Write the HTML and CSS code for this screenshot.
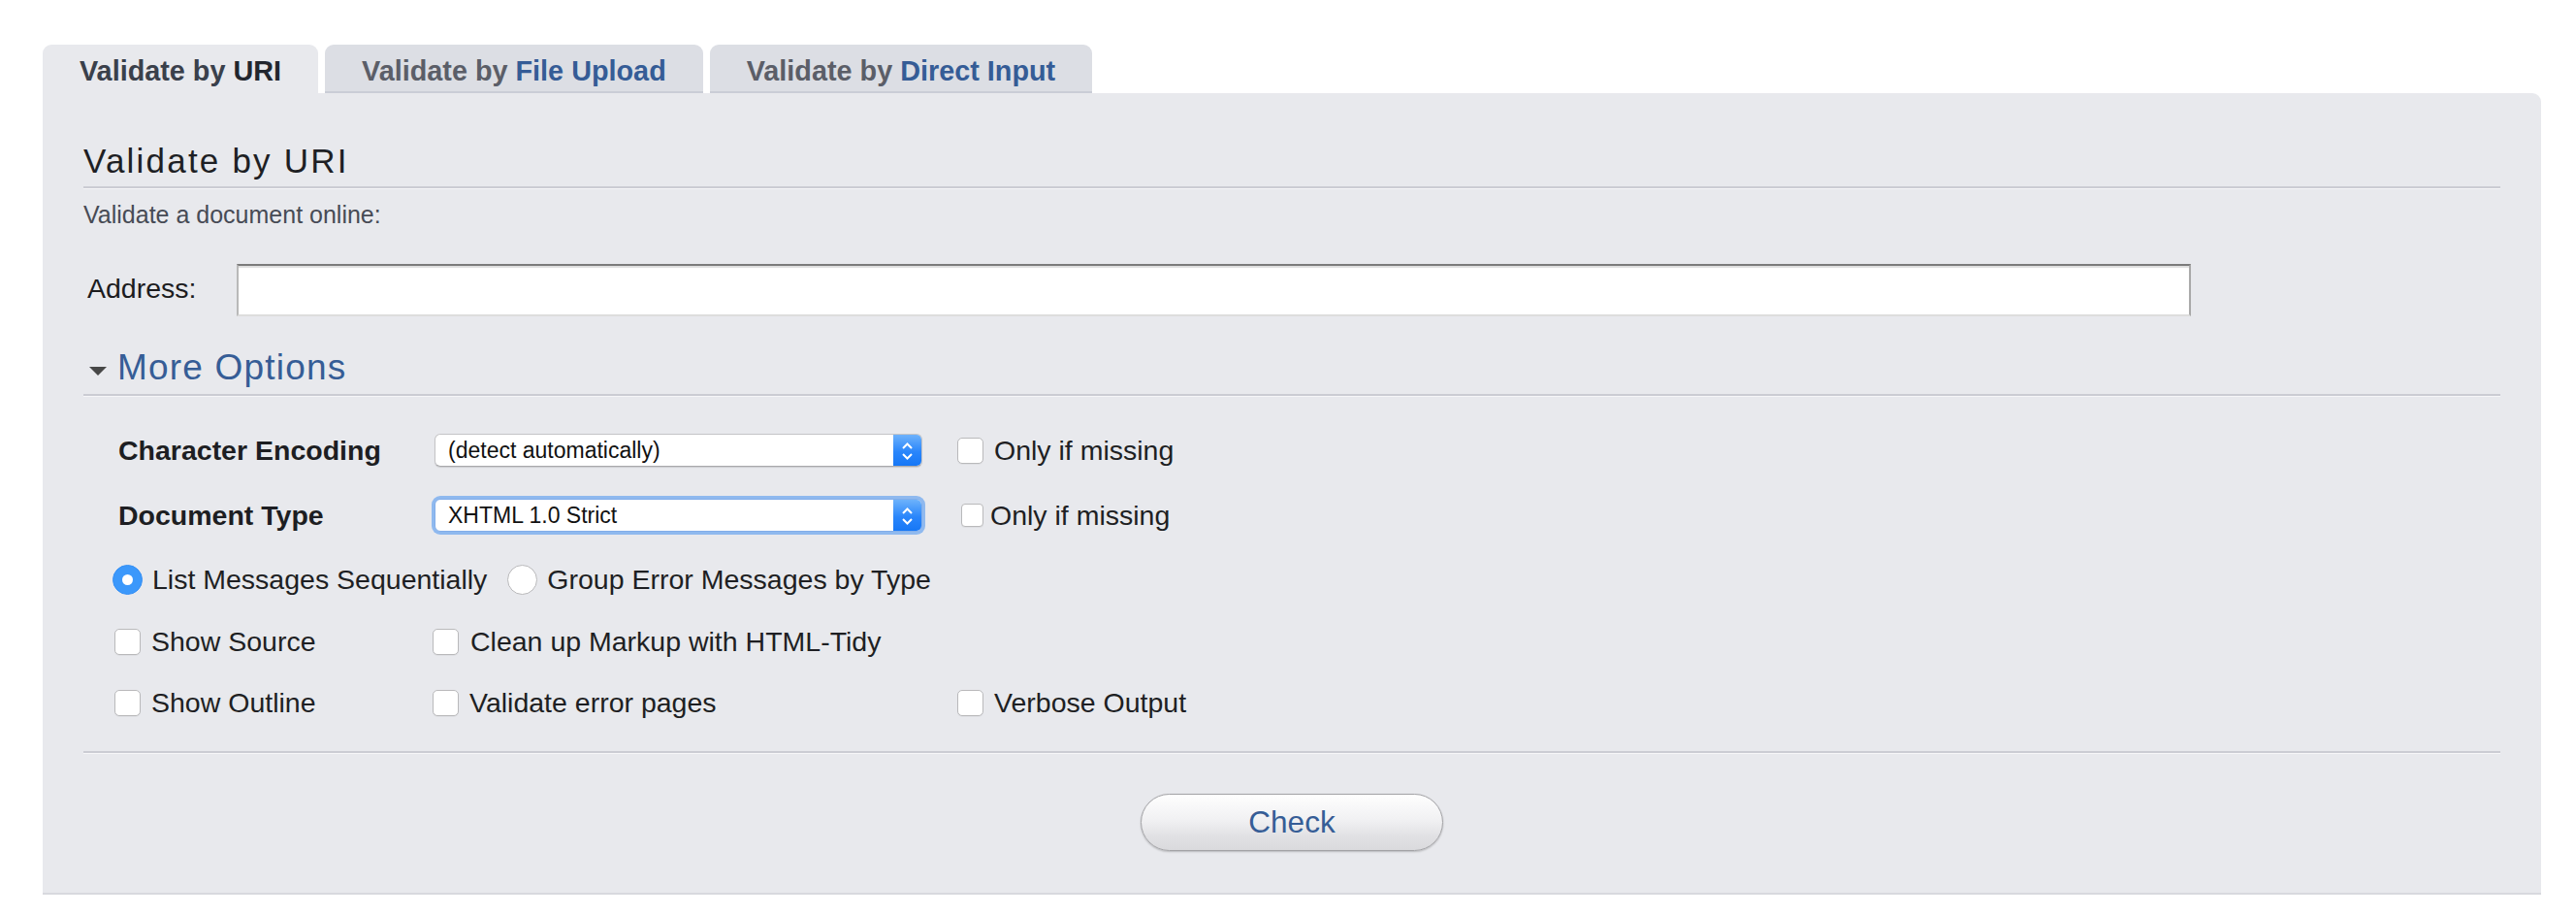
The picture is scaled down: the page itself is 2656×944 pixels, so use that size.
FILE: index.html
```html
<!DOCTYPE html>
<html lang="en">
<head>
<meta charset="utf-8">
<title>Validate by URI</title>
<link rel="stylesheet" href="styles.css">
</head>
<body>
<div class="page">
  <ul class="tabs">
    <li class="tab tab-active"><span class="tab-pre">Validate by</span> <span class="tab-key">URI</span></li>
    <li class="tab"><span class="tab-pre">Validate by</span> <span class="tab-key">File Upload</span></li>
    <li class="tab"><span class="tab-pre">Validate by</span> <span class="tab-key">Direct Input</span></li>
  </ul>
  <div class="panel">
    <h2 class="panel-title">Validate by URI</h2>
    <p class="intro">Validate a document online:</p>
    <div class="address-row">
      <label class="address-label" for="uri">Address:</label>
      <input class="address-input" id="uri" type="text">
    </div>
    <h3 class="more"><span class="tri"></span>More Options</h3>
    <div class="options">
      <div class="opt-label">Character Encoding</div>
      <div class="select">
        <span class="select-text">(detect automatically)</span>
        <span class="select-arrow"><svg width="29" height="34" viewBox="0 0 29 34"><polyline points="10,14 14.5,9.5 19,14" fill="none" stroke="#fff" stroke-width="2"/><polyline points="10,20 14.5,24.5 19,20" fill="none" stroke="#fff" stroke-width="2"/></svg></span>
      </div>
      <label class="check"><input type="checkbox" class="box">Only if missing</label>

      <div class="opt-label">Document Type</div>
      <div class="select select-focus">
        <span class="select-text">XHTML 1.0 Strict</span>
        <span class="select-arrow"><svg width="29" height="34" viewBox="0 0 29 34"><polyline points="10,14 14.5,9.5 19,14" fill="none" stroke="#fff" stroke-width="2"/><polyline points="10,20 14.5,24.5 19,20" fill="none" stroke="#fff" stroke-width="2"/></svg></span>
      </div>
      <label class="check check-tight"><input type="checkbox" class="box box-small">Only if missing</label>

      <div class="radios">
        <label class="radio"><input type="radio" name="group" class="dot" checked>List Messages Sequentially</label>
        <label class="radio"><input type="radio" name="group" class="dot">Group Error Messages by Type</label>
      </div>

      <label class="check check-first"><input type="checkbox" class="box">Show Source</label>
      <label class="check check-wide"><input type="checkbox" class="box">Clean up Markup with HTML-Tidy</label>

      <label class="check check-first"><input type="checkbox" class="box">Show Outline</label>
      <label class="check"><input type="checkbox" class="box">Validate error pages</label>
      <label class="check"><input type="checkbox" class="box">Verbose Output</label>
    </div>
    <div class="actions">
      <button class="check-btn" type="button">Check</button>
    </div>
  </div>
</div>
</body>
</html>
```

FILE: styles.css
```css
* { box-sizing: border-box; }

html, body {
  margin: 0;
  padding: 0;
  background: #ffffff;
}

body {
  font-family: "Liberation Sans", Arial, Helvetica, sans-serif;
  font-size: 28.5px;
  color: #1f2024;
}

.page {
  padding: 46px 36px 0 44px;
}

/* Tabs */
.tabs {
  list-style: none;
  margin: 0;
  padding: 0;
  display: flex;
  gap: 7px;
}

.tab {
  height: 50px;
  padding: 4px 38px 0;
  line-height: 46px;
  font-weight: bold;
  font-size: 28.8px;
  white-space: nowrap;
  background: #dcdee4;
  border-bottom: 2px solid #cacdd6;
  border-radius: 9px 9px 0 0;
}

.tab .tab-pre { color: #5b5e68; }
.tab .tab-key { color: #355c96; }

.tab-active {
  background: #e8e9ed;
  border-bottom: none;
}
.tab-active .tab-pre { color: #3a404b; }
.tab-active .tab-key { color: #22262e; }

/* Panel */
.panel {
  width: 2576px;
  background: #e8e9ed;
  border-radius: 0 9px 0 0;
  border-bottom: 2px solid #d8d9de;
  padding: 49px 42px 43px;
}

.panel-title {
  margin: 0;
  font-size: 35px;
  font-weight: normal;
  line-height: 42px;
  letter-spacing: 2.2px;
  color: #1e1f24;
  padding-bottom: 5px;
  border-bottom: 2px solid #cbccd3;
  box-shadow: 0 1px 0 #f6f6f8;
}

.intro {
  margin: 12px 0 0;
  font-size: 25px;
  line-height: 30px;
  color: #474b55;
}

.address-row {
  margin-top: 36px;
  display: flex;
  align-items: center;
  height: 54px;
}

.address-label {
  width: 158px;
  padding-left: 4px;
  padding-bottom: 3px;
  color: #1c1c1e;
}

.address-input {
  width: 2015px;
  height: 54px;
  margin: 0;
  background: #ffffff;
  border-style: solid;
  border-width: 2px;
  border-color: #7b7b7b #a9a9a9 #dddddd #b9b9b9;
  box-shadow: inset 0 2px 1px #dedede;
  font-family: inherit;
  font-size: 26px;
  padding: 0 8px;
  outline: none;
}

.more {
  margin: 31px 0 0;
  font-size: 37px;
  font-weight: normal;
  line-height: 44px;
  letter-spacing: 1.2px;
  color: #365d96;
  display: flex;
  align-items: center;
  padding-bottom: 5px;
  border-bottom: 2px solid #cbccd3;
  box-shadow: 0 1px 0 #f6f6f8;
}

.tri {
  width: 0;
  height: 0;
  margin: 7px 11px 0 6px;
  border-left: 9px solid transparent;
  border-right: 9px solid transparent;
  border-top: 9px solid #474747;
}

/* Options grid */
.options {
  margin-top: 22.5px;
  padding: 0 0 18.5px 30px;
  display: grid;
  grid-template-columns: 330px 541px auto;
  grid-template-rows: 67px 67px 65px 63px 63px;
  align-items: center;
  border-bottom: 2px solid #cbccd3;
  box-shadow: 0 1px 0 #f6f6f8;
}

.opt-label {
  font-weight: bold;
  color: #1d1e22;
  padding-left: 6px;
}

.select {
  width: 503px;
  height: 34px;
  margin-left: 2px;
  display: flex;
  align-items: stretch;
  background: #ffffff;
  border: 1px solid #c4c4c6;
  border-bottom-color: #a9a9ab;
  border-radius: 6px;
  box-shadow: 0 1px 1px rgba(0, 0, 0, 0.12);
  overflow: hidden;
}

.select-focus {
  box-shadow: 0 0 0 3px #8fb9ef;
  border-color: #82aee9;
}

.select-text {
  flex: 1;
  padding-left: 13px;
  font-size: 23px;
  line-height: 32px;
  color: #111111;
}

.select-arrow {
  width: 29px;
  display: block;
  background: linear-gradient(#6db2fb, #2a86fb 55%, #1677f6);
}

.select-arrow svg {
  display: block;
}

.check {
  display: flex;
  align-items: center;
  gap: 11px;
  color: #1e1f23;
  white-space: nowrap;
}

.check-first {
  margin-left: 2px;
}

.check-wide {
  grid-column: 2 / span 2;
  gap: 12px;
}

.check-tight {
  padding-left: 4px;
  gap: 7px;
}

.box {
  appearance: none;
  -webkit-appearance: none;
  margin: 0;
  width: 27px;
  height: 27px;
  flex: none;
  background: #ffffff;
  border: 1px solid #b9b9bb;
  border-radius: 5px;
  box-shadow: 0 1px 0 rgba(0, 0, 0, 0.04);
}

.box-small {
  width: 23px;
  height: 24px;
  border-radius: 4px;
}

.radios {
  grid-column: 1 / span 3;
  display: flex;
  align-items: center;
  gap: 21px;
}

.radio {
  display: flex;
  align-items: center;
  gap: 10px;
  color: #1e1f23;
  white-space: nowrap;
}

.dot {
  appearance: none;
  -webkit-appearance: none;
  margin: 0;
  width: 31px;
  height: 31px;
  flex: none;
  border-radius: 50%;
  background: #ffffff;
  border: 1px solid #b9b9bb;
  position: relative;
}

.dot:checked {
  background: #3b98fb;
  border-color: #3690f5;
}

.dot:checked::after {
  content: "";
  position: absolute;
  left: 9px;
  top: 9px;
  width: 11px;
  height: 11px;
  border-radius: 50%;
  background: #ffffff;
}

/* Actions */
.actions {
  padding-top: 42px;
  display: flex;
  justify-content: center;
}

.check-btn {
  width: 312px;
  height: 59px;
  margin: 0;
  border-radius: 30px;
  border: 1px solid #a3a3a6;
  background: linear-gradient(#fefefe, #f1f1f3 45%, #e1e1e4 75%, #dadadd);
  box-shadow: 0 1px 2px rgba(0, 0, 0, 0.22);
  font-family: inherit;
  font-size: 31.5px;
  color: #365d96;
  padding: 0;
  cursor: pointer;
}
```
